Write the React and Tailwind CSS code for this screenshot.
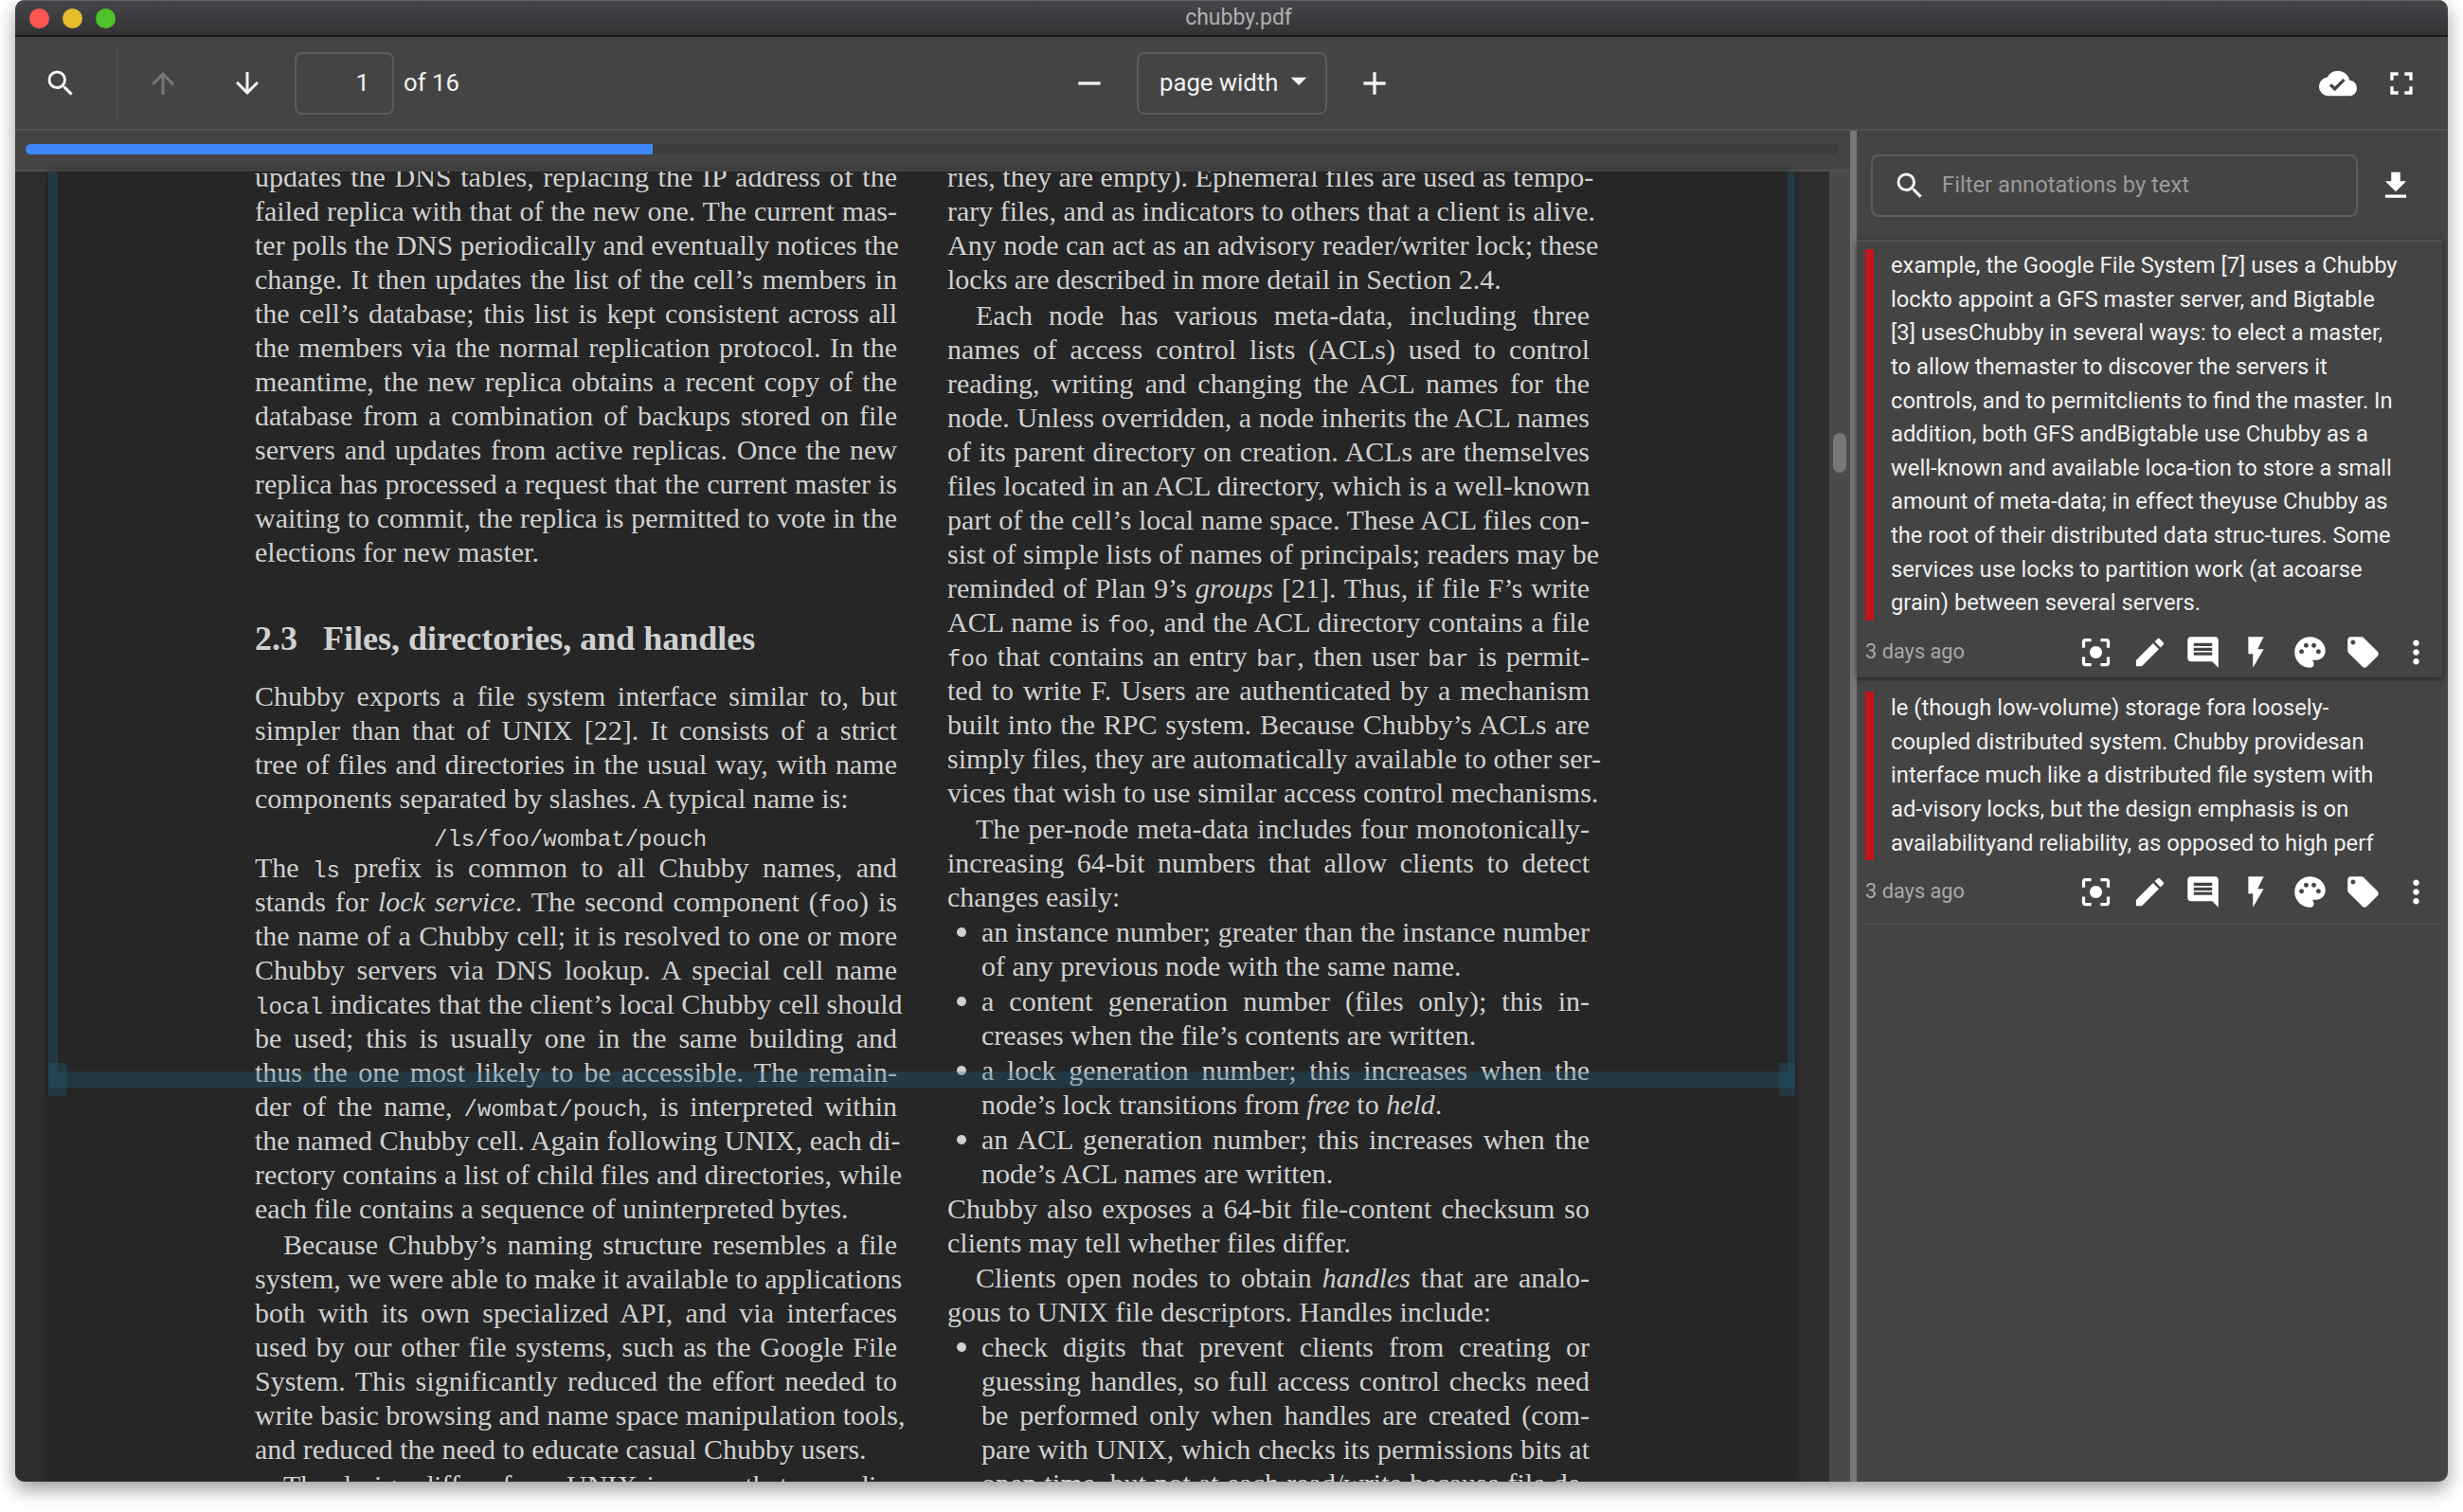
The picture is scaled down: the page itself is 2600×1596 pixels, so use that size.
import {
  MdAdd,
  MdArrowDownward,
  MdArrowDropDown,
  MdArrowUpward,
  MdCenterFocusStrong,
  MdCloudDone,
  MdComment,
  MdEdit,
  MdFileDownload,
  MdFlashOn,
  MdFullscreen,
  MdLocalOffer,
  MdMoreVert,
  MdPalette,
  MdRemove,
  MdSearch,
} from "react-icons/md";

// one printed line of the pdf, stretched to the column width
const L = ({ children, indent }) => (
  <div className={`h-[36px] whitespace-nowrap text-justify [text-align-last:justify] ${indent ? "pl-[30px]" : ""}`}>
    {children}
  </div>
);

// last line of a paragraph, not stretched
const E = ({ children, indent }) => (
  <div className={`h-[36px] whitespace-nowrap ${indent ? "pl-[30px]" : ""}`}>{children}</div>
);

const M = ({ children }) => <span className="font-['Liberation_Mono',monospace] text-[24px]">{children}</span>;

const Bullet = ({ children }) => (
  <div className="flex">
    <div className="w-[36px] shrink-0 pl-[10px] pt-[13px]">
      <div className="w-[10px] h-[10px] rounded-full bg-[#d0d0d0]"></div>
    </div>
    <div className="flex-1 min-w-0">{children}</div>
  </div>
);

const LeftColumn = () => (
  <div className="w-[678px] shrink-0">
    <L>updates the DNS tables, replacing the IP address of the</L>
    <L>failed replica with that of the new one. The current mas-</L>
    <L>ter polls the DNS periodically and eventually notices the</L>
    <L>change. It then updates the list of the cell’s members in</L>
    <L>the cell’s database; this list is kept consistent across all</L>
    <L>the members via the normal replication protocol. In the</L>
    <L>meantime, the new replica obtains a recent copy of the</L>
    <L>database from a combination of backups stored on file</L>
    <L>servers and updates from active replicas. Once the new</L>
    <L>replica has processed a request that the current master is</L>
    <L>waiting to commit, the replica is permitted to vote in the</L>
    <E>elections for new master.</E>
    <div className="h-[36px] mt-[55px] mb-[25px] whitespace-nowrap font-bold text-[36px] leading-[36px]">
      2.3<span className="ml-[27px]">Files, directories, and handles</span>
    </div>
    <L>Chubby exports a file system interface similar to, but</L>
    <L>simpler than that of UNIX [22]. It consists of a strict</L>
    <L>tree of files and directories in the usual way, with name</L>
    <E>components separated by slashes. A typical name is:</E>
    <div className="h-[36px] mt-[4px] mb-[-3px] pl-[189px] whitespace-nowrap"><M>/ls/foo/wombat/pouch</M></div>
    <L>The <M>ls</M> prefix is common to all Chubby names, and</L>
    <L>stands for <i>lock service</i>. The second component (<M>foo</M>) is</L>
    <L>the name of a Chubby cell; it is resolved to one or more</L>
    <L>Chubby servers via DNS lookup. A special cell name</L>
    <L><M>local</M> indicates that the client’s local Chubby cell should</L>
    <L>be used; this is usually one in the same building and</L>
    <L>thus the one most likely to be accessible. The remain-</L>
    <L>der of the name, <M>/wombat/pouch</M>, is interpreted within</L>
    <L>the named Chubby cell. Again following UNIX, each di-</L>
    <L>rectory contains a list of child files and directories, while</L>
    <E>each file contains a sequence of uninterpreted bytes.</E>
    <div className="mt-[2px]">
      <L indent>Because Chubby’s naming structure resembles a file</L>
      <L>system, we were able to make it available to applications</L>
      <L>both with its own specialized API, and via interfaces</L>
      <L>used by our other file systems, such as the Google File</L>
      <L>System. This significantly reduced the effort needed to</L>
      <L>write basic browsing and name space manipulation tools,</L>
      <E>and reduced the need to educate casual Chubby users.</E>
    </div>
    <div className="mt-[2px]">
      <L indent>The design differs from UNIX in ways that ease dis-</L>
    </div>
  </div>
);

const RightColumn = () => (
  <div className="w-[678px] shrink-0">
    <L>ries, they are empty). Ephemeral files are used as tempo-</L>
    <L>rary files, and as indicators to others that a client is alive.</L>
    <L>Any node can act as an advisory reader/writer lock; these</L>
    <E>locks are described in more detail in Section 2.4.</E>
    <div className="mt-[2px]">
      <L indent>Each node has various meta-data, including three</L>
      <L>names of access control lists (ACLs) used to control</L>
      <L>reading, writing and changing the ACL names for the</L>
      <L>node. Unless overridden, a node inherits the ACL names</L>
      <L>of its parent directory on creation. ACLs are themselves</L>
      <L>files located in an ACL directory, which is a well-known</L>
      <L>part of the cell’s local name space. These ACL files con-</L>
      <L>sist of simple lists of names of principals; readers may be</L>
      <L>reminded of Plan 9’s <i>groups</i> [21]. Thus, if file F’s write</L>
      <L>ACL name is <M>foo</M>, and the ACL directory contains a file</L>
      <L><M>foo</M> that contains an entry <M>bar</M>, then user <M>bar</M> is permit-</L>
      <L>ted to write F. Users are authenticated by a mechanism</L>
      <L>built into the RPC system. Because Chubby’s ACLs are</L>
      <L>simply files, they are automatically available to other ser-</L>
      <L>vices that wish to use similar access control mechanisms.</L>
    </div>
    <div className="mt-[2px]">
      <L indent>The per-node meta-data includes four monotonically-</L>
      <L>increasing 64-bit numbers that allow clients to detect</L>
      <E>changes easily:</E>
    </div>
    <div className="mt-[1px] flex flex-col gap-[1px]">
      <Bullet>
        <L>an instance number; greater than the instance number</L>
        <E>of any previous node with the same name.</E>
      </Bullet>
      <Bullet>
        <L>a content generation number (files only); this in-</L>
        <E>creases when the file’s contents are written.</E>
      </Bullet>
      <Bullet>
        <L>a lock generation number; this increases when the</L>
        <E>node’s lock transitions from <i>free</i> to <i>held</i>.</E>
      </Bullet>
      <Bullet>
        <L>an ACL generation number; this increases when the</L>
        <E>node’s ACL names are written.</E>
      </Bullet>
    </div>
    <div className="mt-[1px]">
      <L>Chubby also exposes a 64-bit file-content checksum so</L>
      <E>clients may tell whether files differ.</E>
    </div>
    <div className="mt-[1px]">
      <L indent>Clients open nodes to obtain <i>handles</i> that are analo-</L>
      <E>gous to UNIX file descriptors. Handles include:</E>
    </div>
    <div className="mt-[1px]">
      <Bullet>
        <L>check digits that prevent clients from creating or</L>
        <L>guessing handles, so full access control checks need</L>
        <L>be performed only when handles are created (com-</L>
        <L>pare with UNIX, which checks its permissions bits at</L>
        <L>open time, but not at each read/write because file de-</L>
      </Bullet>
    </div>
  </div>
);

const ToolbarLeft = () => (
  <div className="flex-1 flex items-center pl-[30px] text-[#f2f2f2]">
    <MdSearch size={36} />
    <div className="ml-[41px] w-[1px] h-[80px] bg-[#555555]"></div>
    <MdArrowUpward size={36} className="ml-[30px] text-[#777777]" />
    <MdArrowDownward size={36} className="ml-[53px]" />
    <div className="ml-[32px] w-[105px] h-[66px] border-2 border-[#5c5c5c] rounded-[8px] flex items-center justify-end pr-[24px] text-[25.7px]">
      1
    </div>
    <span className="ml-[10px] text-[25.7px]">of 16</span>
  </div>
);

const ToolbarCenter = () => (
  <div className="flex items-center text-[#f2f2f2]">
    <MdRemove size={40} />
    <div className="relative ml-[30px] w-[201px] h-[66px] border-2 border-[#5c5c5c] rounded-[8px] flex items-center pl-[22px] text-[25.7px]">
      page width
      <MdArrowDropDown size={40} className="absolute right-[8px] top-[8px]" />
    </div>
    <MdAdd size={40} className="ml-[30px]" />
  </div>
);

const ToolbarRight = () => (
  <div className="flex-1 flex items-center justify-end pr-[29px] gap-[27px] text-white">
    <MdCloudDone size={40} />
    <MdFullscreen size={40} />
  </div>
);

const Viewer = () => (
  <div className="flex-1 min-h-0 flex bg-[#2e2e2e]">
    <div className="relative w-[1844px] ml-[35px] shrink-0 bg-[#262626] overflow-hidden shadow-[0_0_8px_rgba(0,0,0,0.4)] font-['Liberation_Serif',serif] text-[30px] leading-[36px] text-[#d0d0d0]">
      <div className="flex gap-[53px] pl-[218px] mt-[-12px]">
        <LeftColumn />
        <RightColumn />
      </div>
      <div className="absolute left-0 top-0 w-[10px] h-[950px] bg-[#1e6482]/30"></div>
      <div className="absolute right-0 top-0 w-[8px] h-[950px] bg-[#1e6482]/30"></div>
      <div className="absolute left-0 right-0 top-[950px] h-[17px] bg-[#1e6482]/30"></div>
      <div className="absolute left-0 top-[941px] w-[19px] h-[35px] bg-[#1e6482]/30"></div>
      <div className="absolute right-0 top-[941px] w-[17px] h-[35px] bg-[#1e6482]/30"></div>
    </div>
    <div className="w-[36px] shrink-0"></div>
    <div className="w-[22px] shrink-0 bg-[#4a4a4a] pl-[4px] pt-[276px]">
      <div className="w-[14px] h-[42px] rounded-full bg-[#777777]"></div>
    </div>
  </div>
);

const actions = [MdCenterFocusStrong, MdEdit, MdComment, MdFlashOn, MdPalette, MdLocalOffer, MdMoreVert];

const CardFooter = ({ className }) => (
  <div className={`ml-[9px] w-[610px] flex items-center justify-between ${className}`}>
    <span className="text-[21.78px] text-[#a8a8a8]">3 days ago</span>
    <div className="flex">
      {actions.map((Icon, i) => (
        <div key={i} className="w-[56.33px] flex justify-center text-white">
          <Icon size={39} />
        </div>
      ))}
    </div>
  </div>
);

const Annotation = ({ lines }) => (
  <div className="ml-[9px] flex">
    <div className="w-[9px] shrink-0 bg-[#c4161c]"></div>
    <div className="ml-[18px] text-[23.76px] leading-[35.64px] text-[#f0f0f0] whitespace-nowrap">
      {lines.map((line) => (
        <div key={line}>{line}</div>
      ))}
    </div>
  </div>
);

const Sidebar = () => (
  <div className="flex-1 min-w-0 flex flex-col">
    <div className="h-[115px] shrink-0 flex items-center pl-[15px] pt-[0px]">
      <div className="w-[514px] h-[66px] border-2 border-[#5c5c5c] rounded-[8px] flex items-center pl-[21px] text-[#f2f2f2]">
        <MdSearch size={36} />
        <span className="ml-[16px] text-[23.76px] text-[#9a9a9a]">Filter annotations by text</span>
      </div>
      <MdFileDownload size={38} className="ml-[21px] text-white" />
    </div>
    <div className="mr-[6px] border-t-2 border-[#4e4e4e] pt-[8px] shadow-[0_2px_6px_rgba(0,0,0,0.45)]">
      <Annotation
        lines={[
          "example, the Google File System [7] uses a Chubby",
          "lockto appoint a GFS master server, and Bigtable",
          "[3] usesChubby in several ways: to elect a master,",
          "to allow themaster to discover the servers it",
          "controls, and to permitclients to find the master. In",
          "addition, both GFS andBigtable use Chubby as a",
          "well-known and available loca-tion to store a small",
          "amount of meta-data; in effect theyuse Chubby as",
          "the root of their distributed data struc-tures. Some",
          "services use locks to partition work (at acoarse",
          "grain) between several servers.",
        ]}
      />
      <CardFooter className="h-[60px] pt-[6px]" />
    </div>
    <div className="mx-[9px] mt-[5px] h-[2px] bg-[#4a4a4a]"></div>
    <div className="pt-[8px]">
      <Annotation
        lines={[
          "le (though low-volume) storage fora loosely-",
          "coupled distributed system. Chubby providesan",
          "interface much like a distributed file system with",
          "ad-visory locks, but the design emphasis is on",
          "availabilityand reliability, as opposed to high perf",
        ]}
      />
      <CardFooter className="h-[66px]" />
      <div className="mx-[9px] h-[2px] bg-[#4e4e4e]"></div>
    </div>
  </div>
);

const App = () => (
  <div className="w-[2600px] h-[1596px] bg-white overflow-hidden px-[16px] font-['Roboto',sans-serif]">
    <div className="h-[1564px] flex flex-col rounded-[10px] overflow-hidden bg-[#444444] shadow-[0_8px_20px_rgba(0,0,0,0.4)]">
      <div className="h-[39px] shrink-0 flex items-center bg-gradient-to-b from-[#46464a] to-[#333336] border-t border-t-[#626262] border-b-2 border-b-[#161616]">
        <div className="flex-1 flex gap-[14px] pl-[15px]">
          <div className="w-[21px] h-[21px] rounded-full bg-[#ff5551]"></div>
          <div className="w-[21px] h-[21px] rounded-full bg-[#e6bd2a]"></div>
          <div className="w-[21px] h-[21px] rounded-full bg-[#4fc22c]"></div>
        </div>
        <span className="text-[23px] text-[#b0b0b0]">chubby.pdf</span>
        <div className="flex-1"></div>
      </div>
      <div className="h-[99px] shrink-0 flex items-center border-b-2 border-[#505050]">
        <ToolbarLeft />
        <ToolbarCenter />
        <ToolbarRight />
      </div>
      <div className="flex-1 min-h-0 flex">
        <div className="w-[1937px] shrink-0 flex flex-col">
          <div className="h-[43px] shrink-0 pl-[11px] pr-[12px] pt-[14px] border-b-2 border-[#505050]">
            <div className="h-[11px] rounded-full bg-[#3d3d3d] overflow-hidden">
              <div className="w-[662px] h-full bg-[#3f86fb]"></div>
            </div>
          </div>
          <Viewer />
        </div>
        <div className="w-[7px] shrink-0 bg-[#777777]"></div>
        <Sidebar />
      </div>
    </div>
  </div>
);

export default App;
